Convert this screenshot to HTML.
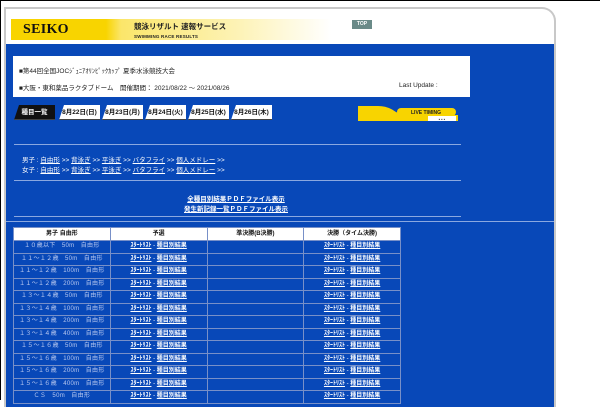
<!DOCTYPE html>
<html><head><meta charset="utf-8"><style>
*{margin:0;padding:0;box-sizing:border-box}
body{width:600px;height:400px;overflow:hidden;background:#fff;font-family:"Liberation Sans","Noto Sans CJK JP",sans-serif;position:relative;border-top:1px solid #000;border-left:1px solid #000}
.panel{position:absolute;left:3px;top:6px;width:552px;height:400px;border:2px solid #c8c8c8;border-bottom:none;border-top-right-radius:14px;background:#fff;overflow:hidden}
.blue{position:absolute;left:0;top:35px;right:0;bottom:0;background:#0848b8}
.yb{position:absolute;left:5px;top:10px;width:320px;height:21px;background:linear-gradient(90deg,#f8d400 0,#f8d400 95px,#fbe66a 110px,#fdf3b8 230px,#fff 320px)}
.seiko{position:absolute;left:17px;top:13px;font:bold 14px "Liberation Serif",serif;color:#111;letter-spacing:0.3px}
.t1{position:absolute;left:128px;top:12px;font-size:7.5px;font-weight:bold;color:#222;white-space:nowrap}
.t2{position:absolute;left:128px;top:25px;font-size:4.5px;font-weight:bold;color:#222;letter-spacing:.2px;white-space:nowrap}
.top{position:absolute;left:346px;top:11px;width:20px;height:9px;background:#6a8a88;color:#fff;font-size:5px;text-align:center;line-height:9px;font-weight:bold}
.info{position:absolute;left:7px;top:47px;width:457px;height:41px;background:#fff;font-size:6.5px;color:#222}
.info div{position:absolute;left:6px;white-space:nowrap}
.tab{position:absolute;top:96px;height:15px;background:#fff;font-size:6.5px;font-weight:bold;color:#111;line-height:15px;text-align:center;clip-path:polygon(5px 0,100% 0,100% 100%,0 100%);border-bottom:1px solid #444;white-space:nowrap}
.hr{position:absolute;left:8px;width:447px;height:1px;background:#8aa8e0}
.lk{position:absolute;color:#fff;font-size:6.5px;white-space:nowrap}
.lk u{color:#fff}
table{position:absolute;left:7px;top:218px;width:388px;border-collapse:collapse;font-size:6px;color:#fff;table-layout:fixed}
td{border:1px solid #7890c8;height:12.5px;text-align:center;padding:0;line-height:11px;white-space:nowrap;overflow:hidden}
tr.h td{background:#fff;color:#111;font-weight:bold;height:13px}
td.n{color:#b8c8f0;letter-spacing:.3px}
td u{font-weight:bold}
</style></head><body>
<div class="panel">
<div class="yb"></div>
<div class="seiko">SEIKO</div>
<div class="t1">競泳リザルト 速報サービス</div>
<div class="t2">SWIMMING RACE RESULTS</div>
<div class="top">TOP</div>
<div class="blue"></div>
<div class="info"><div style="top:9px">■第44回全国JOCｼﾞｭﾆｱｵﾘﾝﾋﾟｯｸｶｯﾌﾟ 夏季水泳競技大会</div><div style="top:26px">■大阪・東和薬品ラクタブドーム　開催期間： 2021/08/22 ～ 2021/08/26</div><div style="top:26px;left:386px">Last Update :</div></div>
<div class="tab" style="left:8px;width:41px;background:#111;color:#fff">種目一覧</div>
<div class="tab" style="left:53px;width:41px">8月22日(日)</div>
<div class="tab" style="left:96px;width:41px">8月23日(月)</div>
<div class="tab" style="left:139px;width:41px">8月24日(火)</div>
<div class="tab" style="left:182px;width:41px">8月25日(水)</div>
<div class="tab" style="left:225px;width:41px">8月26日(木)</div>
<svg style="position:absolute;left:352px;top:92px" width="100" height="20"><path d="M0 5 H20 Q30 5 38 11 Q44 14 60 14 H100 V20 H0Z" fill="#f8d400"/><rect x="39" y="7" width="59" height="8" rx="4" fill="#f8d400"/><text x="68" y="13" font-size="5" font-weight="bold" text-anchor="middle" fill="#222">LIVE TIMING</text><rect x="70" y="15" width="28" height="5" fill="#fff"/><text x="84" y="19.5" font-size="4" text-anchor="middle" fill="#222">▪ ▪ ▪</text></svg>
<div class="hr" style="top:135px"></div>
<div class="lk" style="left:16px;top:145px">男子 : <u>自由形</u> &gt;&gt;  <u>背泳ぎ</u> &gt;&gt;  <u>平泳ぎ</u> &gt;&gt;  <u>バタフライ</u> &gt;&gt;  <u>個人メドレー</u> &gt;&gt;</div>
<div class="lk" style="left:16px;top:155px">女子 : <u>自由形</u> &gt;&gt;  <u>背泳ぎ</u> &gt;&gt;  <u>平泳ぎ</u> &gt;&gt;  <u>バタフライ</u> &gt;&gt;  <u>個人メドレー</u> &gt;&gt;</div>
<div class="hr" style="top:171px"></div>
<div class="lk" style="left:150px;width:160px;text-align:center;top:184px;font-weight:bold"><u>全種目別結果ＰＤＦファイル表示</u></div>
<div class="lk" style="left:150px;width:160px;text-align:center;top:194px;font-weight:bold"><u>発生新記録一覧ＰＤＦファイル表示</u></div>
<div class="hr" style="top:207px"></div>
<div style="position:absolute;left:0;right:0;top:212px;height:1px;background:#8aa8e0"></div>
<table>
<tr class="h"><td>男子 自由形</td><td>予選</td><td>準決勝(B決勝)</td><td>決勝（タイム決勝)</td></tr>
<tr><td class="n">１０歳以下　50m　自由形</td><td><u>ｽﾀｰﾄﾘｽﾄ</u> - <u>種目別結果</u></td><td></td><td><u>ｽﾀｰﾄﾘｽﾄ</u> - <u>種目別結果</u></td></tr>
<tr><td class="n">１１～１２歳　50m　自由形</td><td><u>ｽﾀｰﾄﾘｽﾄ</u> - <u>種目別結果</u></td><td></td><td><u>ｽﾀｰﾄﾘｽﾄ</u> - <u>種目別結果</u></td></tr>
<tr><td class="n">１１～１２歳　100m　自由形</td><td><u>ｽﾀｰﾄﾘｽﾄ</u> - <u>種目別結果</u></td><td></td><td><u>ｽﾀｰﾄﾘｽﾄ</u> - <u>種目別結果</u></td></tr>
<tr><td class="n">１１～１２歳　200m　自由形</td><td><u>ｽﾀｰﾄﾘｽﾄ</u> - <u>種目別結果</u></td><td></td><td><u>ｽﾀｰﾄﾘｽﾄ</u> - <u>種目別結果</u></td></tr>
<tr><td class="n">１３～１４歳　50m　自由形</td><td><u>ｽﾀｰﾄﾘｽﾄ</u> - <u>種目別結果</u></td><td></td><td><u>ｽﾀｰﾄﾘｽﾄ</u> - <u>種目別結果</u></td></tr>
<tr><td class="n">１３～１４歳　100m　自由形</td><td><u>ｽﾀｰﾄﾘｽﾄ</u> - <u>種目別結果</u></td><td></td><td><u>ｽﾀｰﾄﾘｽﾄ</u> - <u>種目別結果</u></td></tr>
<tr><td class="n">１３～１４歳　200m　自由形</td><td><u>ｽﾀｰﾄﾘｽﾄ</u> - <u>種目別結果</u></td><td></td><td><u>ｽﾀｰﾄﾘｽﾄ</u> - <u>種目別結果</u></td></tr>
<tr><td class="n">１３～１４歳　400m　自由形</td><td><u>ｽﾀｰﾄﾘｽﾄ</u> - <u>種目別結果</u></td><td></td><td><u>ｽﾀｰﾄﾘｽﾄ</u> - <u>種目別結果</u></td></tr>
<tr><td class="n">１５～１６歳　50m　自由形</td><td><u>ｽﾀｰﾄﾘｽﾄ</u> - <u>種目別結果</u></td><td></td><td><u>ｽﾀｰﾄﾘｽﾄ</u> - <u>種目別結果</u></td></tr>
<tr><td class="n">１５～１６歳　100m　自由形</td><td><u>ｽﾀｰﾄﾘｽﾄ</u> - <u>種目別結果</u></td><td></td><td><u>ｽﾀｰﾄﾘｽﾄ</u> - <u>種目別結果</u></td></tr>
<tr><td class="n">１５～１６歳　200m　自由形</td><td><u>ｽﾀｰﾄﾘｽﾄ</u> - <u>種目別結果</u></td><td></td><td><u>ｽﾀｰﾄﾘｽﾄ</u> - <u>種目別結果</u></td></tr>
<tr><td class="n">１５～１６歳　400m　自由形</td><td><u>ｽﾀｰﾄﾘｽﾄ</u> - <u>種目別結果</u></td><td></td><td><u>ｽﾀｰﾄﾘｽﾄ</u> - <u>種目別結果</u></td></tr>
<tr><td class="n">ＣＳ　50m　自由形</td><td><u>ｽﾀｰﾄﾘｽﾄ</u> - <u>種目別結果</u></td><td></td><td><u>ｽﾀｰﾄﾘｽﾄ</u> - <u>種目別結果</u></td></tr>
</table>
</div>
</body></html>
